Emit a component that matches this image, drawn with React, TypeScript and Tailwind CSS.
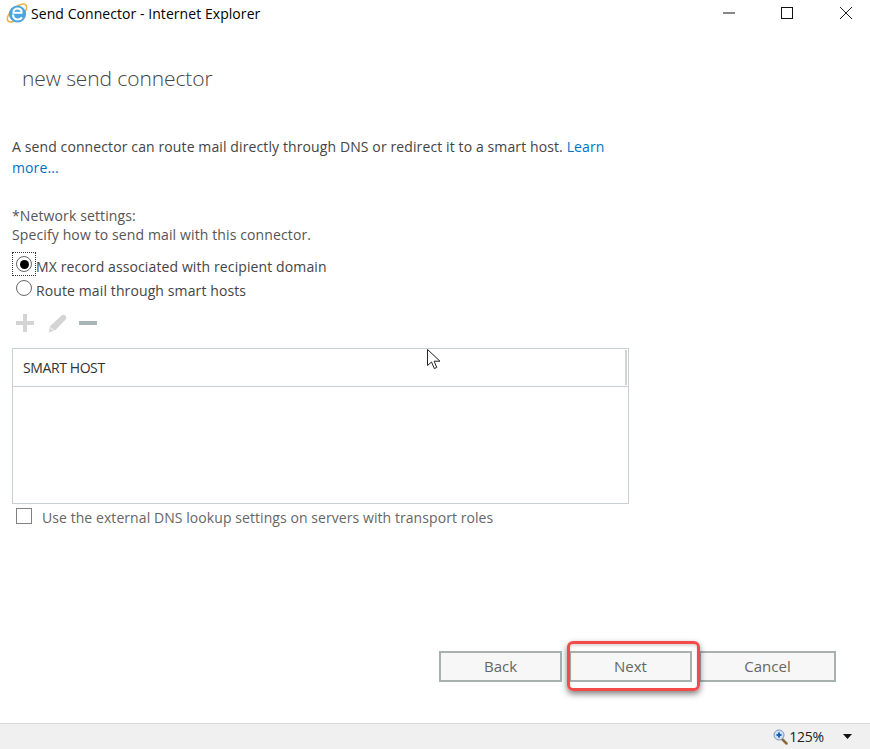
import React from 'react';

const font = { fontFamily: '"Open Sans", "Noto Sans", sans-serif' };

function IeLogo() {
  return (
    <svg width="22" height="22" viewBox="0 0 22 22" fill="none">
      <ellipse cx="11" cy="11" rx="12" ry="5.5" transform="rotate(-42 11 11)" stroke="#e8b548" strokeWidth="1.6" />
      <circle cx="11.5" cy="12" r="8.6" fill="#4aa5e0" />
      <path d="M6.500 10.800h10" stroke="#fff" strokeWidth="2" />
      <path d="M7 12.500c0 3.200 2.200 5 4.800 5 1.800 0 3.200-.8 4.200-2.200" stroke="#fff" strokeWidth="2.200" fill="none" />
      <path d="M7.300 9.800c.6-2 2.300-3.200 4.200-3.200 2.200 0 3.900 1.400 4.300 3.400" stroke="#fff" strokeWidth="2" fill="none" />
    </svg>
  );
}

function WindowControls() {
  return (
    <div className="flex items-center pr-[18px]">
      <svg width="12" height="12" viewBox="0 0 12 12" className="mr-[46px]">
        <path d="M0 6h12" stroke="#111" strokeWidth="1" />
      </svg>
      <div className="mr-[47px] h-[12px] w-[12px] border border-[#111]" />
      <svg width="12" height="12" viewBox="0 0 12 12">
        <path d="M0 0l12 12M12 0L0 12" stroke="#222" strokeWidth="1" />
      </svg>
    </div>
  );
}

function Radio({ checked }: { checked?: boolean }) {
  return (
    <span className="flex h-[16px] w-[16px] shrink-0 items-center justify-center rounded-full border border-[#666] bg-white">
      {checked && <span className="h-[9px] w-[9px] rounded-full bg-black" />}
    </span>
  );
}

function FooterButton({ label, width }: { label: string; width: string }) {
  return (
    <button className={`h-[31px] ${width} border-2 border-[#a9b0b0] bg-[#f7f7f7] text-[15px] text-[#666]`}>
      {label}
    </button>
  );
}

export default function App() {
  return (
    <div className="relative flex h-[749px] w-[870px] flex-col overflow-hidden bg-white" style={font}>
      <div className="flex h-[26px] items-center justify-between pl-[6px]">
        <div className="flex items-center gap-[3px]">
          <IeLogo />
          <span className="text-[14px] tracking-[0.06px] text-black">Send Connector - Internet Explorer</span>
        </div>
        <WindowControls />
      </div>

      <h1 className="mt-[36px] pl-[22px] text-[21px] leading-[32px] font-light tracking-[-0.1px] text-[#444]">
        new send connector
      </h1>

      <p className="mt-[42px] w-[610px] pl-[12px] text-[14px] leading-[21px] tracking-[0.11px] text-[#444]">
        A send connector can route mail directly through DNS or redirect it to a smart host.{' '}
        <span className="text-[#0072c6]">Learn more...</span>
      </p>

      <div className="mt-[28px] pl-[12px] text-[14px] leading-[19px] tracking-[0.12px] text-[#555]">
        <div>*Network settings:</div>
        <div>Specify how to send mail with this connector.</div>
      </div>

      <div className="mt-[8px] flex h-[24px] items-start pl-[12px] text-[14px] tracking-[0.11px] text-[#444]">
        <span className="flex h-[24px] w-[24px] items-center justify-center border border-dotted border-[#333]">
          <Radio checked />
        </span>
        <span className="mt-[3px] leading-[24px] whitespace-nowrap">MX record associated with recipient domain</span>
      </div>
      <div className="flex h-[24px] items-start gap-[4px] pt-[4px] pl-[16px] text-[14px] tracking-[0.11px] text-[#444]">
        <Radio />
        <span className="-mt-[1px] leading-[24px] whitespace-nowrap">Route mail through smart hosts</span>
      </div>

      <div className="mt-[12px] flex h-[22px] items-center gap-[12px] pl-[15px]">
        <svg width="20" height="20" viewBox="0 0 20 20">
          <path d="M8 1h4v7h7v4h-7v7H8v-7H1V8h7z" fill="#d4d4d4" />
        </svg>
        <svg width="21" height="21" viewBox="0 0 21 21">
          <path d="M14.500 2.500c1-1 3-.8 4 .2s1.200 2.800.2 3.800L8 17.500l-5 1.500-1 1 .8-6.500z" fill="#d4d4d4" />
          <path d="M3 14.500l4.500 3.500" stroke="#fff" strokeWidth="1" />
        </svg>
        <div className="-ml-[1px] h-[4px] w-[18px] bg-[#a9b5ba]" />
      </div>

      <div className="mt-[14px] ml-[12px] h-[156px] w-[617px] border border-[#c8d0d4]">
        <div className="flex h-[38px] items-center justify-between border-b border-[#c8d0d4]">
          <span className="pl-[10px] text-[14px] tracking-[-0.4px] text-[#333]">SMART HOST</span>
          <span className="mr-[1px] h-[35px] w-[2px] bg-[#d0d4d6]" />
        </div>
      </div>

      <div className="mt-[4px] flex h-[20px] items-start gap-[10px] pl-[16px] text-[14px] tracking-[0.07px] text-[#666]">
        <span className="h-[16px] w-[16px] border border-[#808080] bg-white" />
        <span className="leading-[20px]">Use the external DNS lookup settings on servers with transport roles</span>
      </div>

      <div className="mt-[123px] flex h-[31px] justify-end pr-[34px]">
        <FooterButton label="Back" width="w-[123px]" />
        <span className="w-[7px]" />
        <FooterButton label="Next" width="w-[123px]" />
        <span className="w-[7px]" />
        <FooterButton label="Cancel" width="w-[137px]" />
      </div>

      <div className="mt-auto flex h-[26px] items-center justify-end border-t border-[#d9d9d9] bg-[#f0f0f0] pr-[18px]">
        <svg width="15" height="16" viewBox="0 0 15 16" className="mr-[1px]">
          <path d="M9 10l4.500 4.500" stroke="#8a6a3a" strokeWidth="2.500" strokeLinecap="round" />
          <circle cx="6" cy="6" r="5" fill="#cfe2f5" stroke="#7d97b5" />
          <path d="M3.500 6h5M6 3.500v5" stroke="#1f5fb5" strokeWidth="2" />
        </svg>
        <span className="text-[14px] tracking-[-0.2px] text-[#222]">125%</span>
        <svg width="9" height="5" viewBox="0 0 9 5" className="ml-[19px]">
          <path d="M0 0h9L4.500 5z" fill="#111" />
        </svg>
      </div>

      {/* red highlight drawn over the Next button */}
      <div className="absolute top-[641px] left-[567px] h-[50px] w-[133px] rounded-[6px] border-[3px] border-[#f44a4a] shadow-[0_3px_6px_rgba(0,0,0,0.5),inset_0_2px_3px_rgba(0,0,0,0.15)]" />

      {/* mouse pointer */}
      <svg width="14" height="21" viewBox="0 0 14 21" className="absolute top-[349px] left-[427px]">
        <path d="M.5.500v16l4-3.500 2.800 6.500 2.500-1-2.700-6.300H13z" fill="#fff" stroke="#222" strokeWidth="1" />
      </svg>
    </div>
  );
}
